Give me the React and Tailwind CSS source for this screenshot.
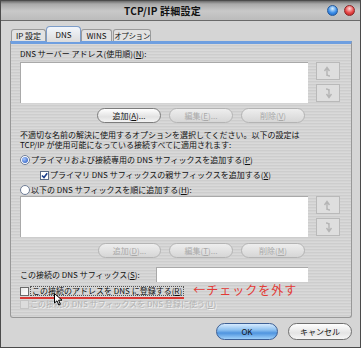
import React from 'react'

const metal = 'bg-[repeating-linear-gradient(180deg,#d9d9d9_0px,#d9d9d9_1px,#cdcdcd_1px,#cdcdcd_2px,#d4d4d4_2px,#d4d4d4_3px)]'

const PillButton = ({ children, disabled, w = 'w-[64px]' }) => (
  <div
    className={`${w} h-[15px] rounded-full flex items-center justify-center text-[8px] leading-none border ${
      disabled
        ? 'border-[#b4b4b4] text-[#a9a9a9] bg-[linear-gradient(180deg,#eeeeee,#d6d6d6)]'
        : 'border-[#7c7c7c] text-[#111] bg-[linear-gradient(180deg,#ffffff,#e2e2e2_60%,#f4f4f4)]'
    }`}
  >
    {children}
  </div>
)

const ArrowBox = ({ down }) => (
  <div className="w-[24px] h-[18px] border border-[#b9b9b9] bg-[#dedede] flex items-center justify-center">
    <svg width="10" height="11" viewBox="0 0 10 11" className={down ? 'rotate-180' : ''}>
      <path d="M4 10 V3 M1.5 5 L4 1.5 L6.5 5 M4 8 Q4 10 7 10" stroke="#b5b5b5" strokeWidth="1.4" fill="none" />
    </svg>
  </div>
)

const ListRow = ({ top }) => (
  <div className={`flex ${top}`}>
    <div className="w-[288px] h-[41px] bg-white border-t border-l border-[#a9a9a9]" />
    <div className="ml-[8px] flex flex-col gap-[4px]">
      <ArrowBox />
      <ArrowBox down />
    </div>
  </div>
)

const Radio = ({ on }) => (
  <div className="w-[10px] h-[10px] rounded-full border border-[#6f7d96] bg-white flex items-center justify-center">
    {on && <div className="w-[6px] h-[6px] rounded-full bg-[radial-gradient(circle_at_35%_35%,#a8c8ff,#1d4fb8)]" />}
  </div>
)

export default function App() {
  return (
    <div className="w-[361px] h-[348px] bg-[#d5d5d5] border border-[#4b4b4b] flex flex-col font-['Noto_Sans_CJK_JP','Liberation_Sans',sans-serif] text-[#111] overflow-hidden relative">
      {/* title bar */}
      <div className="h-[20px] shrink-0 flex items-center bg-[linear-gradient(180deg,#6b6b6b_0px,#a9a9a9_3px,#c9c9c9_10px,#bdbdbd_18px)] border-b border-[#6a6a6a]">
        <span className="ml-[123px] text-[10px] font-bold tracking-[0.2px] leading-none">TCP/IP 詳細設定</span>
        <div className="ml-auto mr-[5px] flex gap-[6px]">
          <div className="w-[11px] h-[11px] rounded-full bg-[radial-gradient(circle_at_50%_30%,#d8f0ff,#3c8ee8_55%,#1c5cb8)] border border-[#245a9c]" />
          <div className="w-[11px] h-[11px] rounded-full bg-[radial-gradient(circle_at_50%_30%,#ffd8d8,#e84848_55%,#b01c1c)] border border-[#8c2424]" />
        </div>
      </div>

      <div className="pl-[9px] pr-[8px] pt-[5px] flex flex-col">
        {/* tabs */}
        <div className="h-[15px] flex items-end pl-[1px] text-[8px] leading-none">
          <div className="w-[35px] h-[12px] border border-b-0 border-[#9a9a9a] rounded-t-[3px] bg-[#e2e2e2] flex items-center justify-center">IP 設定</div>
          <div className="w-[35px] h-[16px] -mb-[1px] relative z-10 border border-b-0 border-[#7c9cc8] rounded-t-[4px] bg-[linear-gradient(180deg,#f2f6fc,#dcdcdc)] flex items-center justify-center">DNS</div>
          <div className="w-[31px] h-[12px] border border-b-0 border-[#9a9a9a] rounded-t-[3px] bg-[#e2e2e2] flex items-center justify-center">WINS</div>
          <div className="ml-[1px] w-[38px] h-[12px] border border-b-0 border-[#9a9a9a] rounded-t-[3px] bg-[#e2e2e2] flex items-center justify-center text-[7.5px] tracking-[-0.4px] whitespace-nowrap">オプション</div>
        </div>

        {/* panel */}
        <div className={`h-[277px] border border-[#989898] border-t-[3px] border-t-[#6f9fe0] rounded-b-[3px] ${metal} pl-[9px] text-[8px] leading-[10px] relative`}>
          <div className="mt-[5px] h-[10px]">
            DNS サーバー アドレス(使用順)(<u>N</u>):
          </div>
          <ListRow top="mt-[3px]" />
          <div className="mt-[5px] flex gap-[8px] pl-[77px]">
            <PillButton>追加(<u>A</u>)...</PillButton>
            <PillButton disabled>編集(<u>E</u>)...</PillButton>
            <PillButton disabled>削除(<u>V</u>)</PillButton>
          </div>
          <div className="mt-[7px]">
            <div>不適切な名前の解決に使用するオプションを選択してください。以下の設定は</div>
            <div>TCP/IP が使用可能になっている接続すべてに適用されます:</div>
          </div>
          <div className="mt-[5px] h-[10px] flex items-center gap-[1px]">
            <Radio on />
            <span>プライマリおよび接続専用の DNS サフィックスを追加する(<u>P</u>)</span>
          </div>
          <div className="mt-[5px] h-[10px] flex items-center gap-[1px] pl-[20px]">
            <div className="w-[9px] h-[9px] border border-[#5b6b86] bg-white flex items-center justify-center">
              <svg width="7" height="7" viewBox="0 0 7 7">
                <path d="M1 3.5 L3 5.5 L6.2 1.2" stroke="#1c3f8c" strokeWidth="1.6" fill="none" />
              </svg>
            </div>
            <span>プライマリ DNS サフィックスの親サフィックスを追加する(<u>X</u>)</span>
          </div>
          <div className="mt-[5px] h-[10px] flex items-center gap-[1px]">
            <Radio />
            <span>以下の DNS サフィックスを順に追加する(<u>H</u>):</span>
          </div>
          <ListRow top="mt-[1px]" />
          <div className="mt-[6px] flex gap-[8px] pl-[78px]">
            <PillButton disabled w="w-[63px]">追加(<u>D</u>)...</PillButton>
            <PillButton disabled>編集(<u>T</u>)...</PillButton>
            <PillButton disabled>削除(<u>M</u>)</PillButton>
          </div>
          <div className="mt-[9px] h-[15px] flex items-center">
            <span className="w-[136px]">この接続の DNS サフィックス(<u>S</u>):</span>
            <div className="w-[152px] h-[15px] bg-white border-t border-l border-[#a9a9a9]" />
          </div>
          <div className="mt-[4px] h-[10px] flex items-center gap-[1px]">
            <div className="w-[9px] h-[9px] border border-[#6a6a6a] bg-[linear-gradient(135deg,#e8e8e8,#ffffff)]" />
            <span className="border border-dotted border-[#555] px-[1px] leading-[8px]">この接続のアドレスを DNS に登録する(<u>R</u>)</span>
            <span className="ml-[8px] mb-[2px] text-[12px] leading-[10px] text-[#e23a36] tracking-[1px]">←チェックを外す</span>
          </div>
          <div className="mt-[1px] w-[164px] h-[2px] bg-[#d83a36]" />
          <div className="mt-0 h-[10px] flex items-center gap-[1px] text-[#b2b2b2]">
            <div className="w-[9px] h-[9px] border border-[#c4c4c4] bg-[#dcdcdc]" />
            <span className="[text-shadow:1px_1px_0_#f2f2f2]">この接続の DNS サフィックスを DNS 登録に使う(<u>U</u>)</span>
          </div>
          {/* mouse pointer */}
          <svg className="absolute left-[43px] top-[249px]" width="9" height="13" viewBox="0 0 9 13">
            <path d="M0.5 0.5 L0.5 10 L3 7.8 L4.8 12 L6.4 11.3 L4.6 7.2 L8 7.2 Z" fill="#fff" stroke="#000" strokeWidth="1" />
          </svg>
        </div>

        {/* bottom buttons */}
        <div className="mt-[5px] flex justify-end gap-[10px]">
          <div className="w-[62px] h-[17px] rounded-full border border-[#3d5f94] bg-[linear-gradient(180deg,#d6ebff_0%,#8cc0f0_40%,#4f94df_60%,#9fd0fa_100%)] flex items-center justify-center text-[8px] leading-none">OK</div>
          <div className="w-[64px] h-[17px] rounded-full border border-[#6f6f6f] bg-[linear-gradient(180deg,#ffffff,#e4e4e4_60%,#f6f6f6)] flex items-center justify-center text-[8px] leading-none">キャンセル</div>
        </div>
      </div>
    </div>
  )
}
